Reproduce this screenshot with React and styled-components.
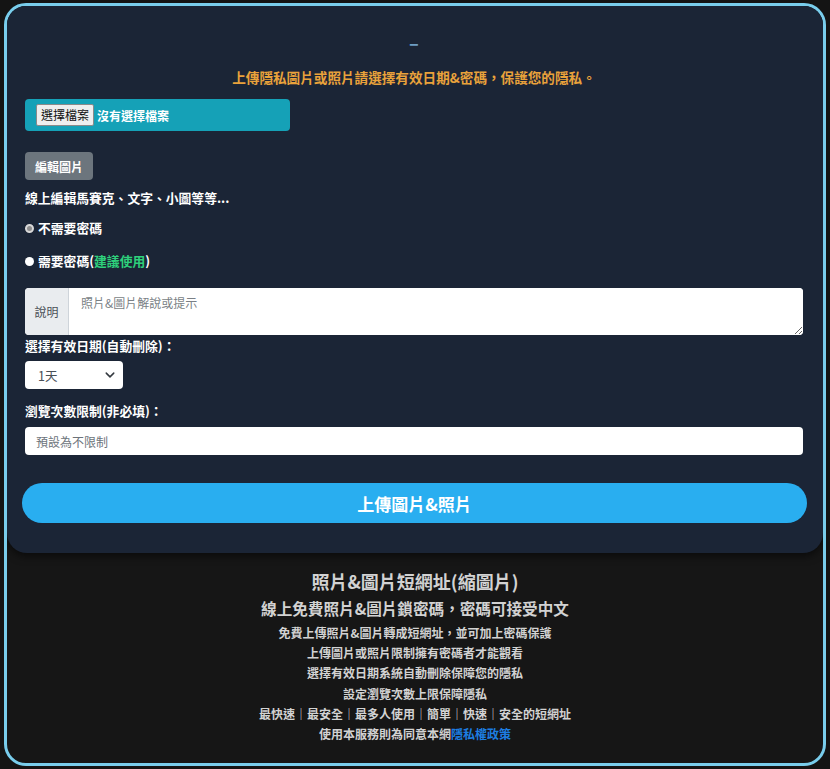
import React from 'react'
import styled, { createGlobalStyle } from 'styled-components'

const Global = createGlobalStyle`
  html, body { margin: 0; padding: 0; background: #141414; }
  body { font-family: "Noto Sans CJK TC", "Noto Sans", sans-serif; }
  * { box-sizing: border-box; }
`

const Frame = styled.div`
  margin: 3px 4px 0;
  height: 763px;
  border: 3px solid #79cdec;
  border-radius: 22px;
  background: #161616;
  overflow: hidden;
`

const Card = styled.div`
  background: #1b2536;
  border-radius: 0 0 20px 20px;
  padding: 24px 20px 30px 18px;
  box-shadow: 0 3px 8px rgba(0, 0, 0, 0.55);
`

const Dash = styled.div`
  text-align: center;
  color: #6f9fc4;
  font-size: 18px;
  font-weight: 700;
  line-height: 24px;
  height: 24px;
`

const Notice = styled.div`
  margin-top: 13px;
  text-align: center;
  color: #e9a23b;
  font-size: 13.6px;
  font-weight: 700;
  line-height: 20px;
`

const FileBox = styled.div`
  margin-top: 12px;
  width: 265px;
  height: 32px;
  background: #15a1b7;
  border-radius: 4px;
  display: flex;
  align-items: center;
  padding-left: 11px;
  gap: 3px;
`

const FileButton = styled.span`
  background: #efefef;
  border: 1px solid #8a8a8a;
  border-radius: 2px;
  color: #111;
  font-size: 12px;
  line-height: 18px;
  padding: 1px 4px;
`

const FileText = styled.span`
  color: #fff;
  font-size: 12px;
  font-weight: 700;
`

const GrayButton = styled.div`
  margin-top: 21px;
  display: inline-flex;
  align-items: center;
  justify-content: center;
  width: 68px;
  height: 28px;
  background: #6c757d;
  border-radius: 4px;
  color: #fff;
  font-size: 12px;
  font-weight: 700;
`

const Line = styled.div`
  margin-top: ${p => p.$mt || 0}px;
  color: #fff;
  font-size: 12.8px;
  font-weight: 700;
  line-height: 18px;
  display: flex;
  align-items: center;
`

const Radio = styled.span`
  width: 9px;
  height: 9px;
  border-radius: 50%;
  margin-right: 4px;
  background: ${p => (p.$checked ? '#8d8d8d' : '#fff')};
  border: ${p => (p.$checked ? '2px solid #d8d8d8' : 'none')};
`

const Green = styled.span`
  color: #2ed07b;
`

const InputGroup = styled.div`
  margin-top: 18px;
  display: flex;
  height: 47px;
  border-radius: 4px;
  overflow: hidden;
  background: #fff;
`

const Addon = styled.div`
  width: 44px;
  background: #e9ecef;
  border-right: 1px solid #ced4da;
  color: #495057;
  font-size: 12px;
  display: flex;
  align-items: center;
  justify-content: center;
`

const TextArea = styled.textarea`
  flex: 1;
  border: none;
  resize: vertical;
  padding: 6px 12px;
  font-family: inherit;
  font-size: 12px;
  line-height: 18px;
  outline: none;
  &::placeholder { color: #7a7f85; }
`

const Select = styled.div`
  margin-top: 6px;
  width: 98px;
  height: 28px;
  background: #fff;
  border-radius: 4px;
  display: flex;
  align-items: center;
  justify-content: space-between;
  padding: 0 8px 0 13px;
  color: #495057;
  font-size: 12.5px;
`

const Input = styled.input`
  display: block;
  margin-top: 7px;
  width: 100%;
  height: 28px;
  border: none;
  border-radius: 4px;
  padding: 0 11px;
  font-family: inherit;
  font-size: 12px;
  outline: none;
  &::placeholder { color: #6c737a; }
`

const BigButton = styled.div`
  margin: 28px -4px 0 -3px;
  height: 40px;
  border-radius: 20px;
  background: #29aef0;
  color: #fff;
  font-size: 17px;
  font-weight: 700;
  display: flex;
  align-items: center;
  justify-content: center;
`

const Footer = styled.div`
  padding-top: 16px;
  text-align: center;
  color: #d2d2d2;
  font-weight: 700;
`

const FooterTitle = styled.div`
  font-size: 18px;
  line-height: 24px;
`

const FooterSub = styled.div`
  margin-top: 4px;
  font-size: 15.6px;
  line-height: 22px;
`

const FooterLines = styled.div`
  margin-top: 4px;
  font-size: 12px;
  line-height: 20.2px;
`

const Link = styled.a`
  color: #1d7ee2;
  text-decoration: none;
`

const Chevron = () => (
  <svg width="10" height="10" viewBox="0 0 16 16">
    <path d="M2 5l6 6 6-6" fill="none" stroke="#343a40" strokeWidth="2.4" strokeLinecap="round" strokeLinejoin="round" />
  </svg>
)

const App = () => {
  return (
    <>
      <Global />
      <Frame>
        <Card>
          <Dash>–</Dash>
          <Notice>上傳隱私圖片或照片請選擇有效日期&密碼，保護您的隱私。</Notice>
          <FileBox>
            <FileButton>選擇檔案</FileButton>
            <FileText>沒有選擇檔案</FileText>
          </FileBox>
          <GrayButton>編輯圖片</GrayButton>
          <Line $mt={9}>線上編輯馬賽克、文字、小圖等等...</Line>
          <Line $mt={12}><Radio $checked />不需要密碼</Line>
          <Line $mt={15}><Radio />需要密碼(<Green>建議使用</Green>)</Line>
          <InputGroup>
            <Addon>說明</Addon>
            <TextArea placeholder="照片&圖片解說或提示" />
          </InputGroup>
          <Line $mt={2}>選擇有效日期(自動刪除)：</Line>
          <Select>
            <span>1天</span>
            <Chevron />
          </Select>
          <Line $mt={13}>瀏覽次數限制(非必填)：</Line>
          <Input placeholder="預設為不限制" />
          <BigButton>上傳圖片&照片</BigButton>
        </Card>
        <Footer>
          <FooterTitle>照片&圖片短網址(縮圖片)</FooterTitle>
          <FooterSub>線上免費照片&圖片鎖密碼，密碼可接受中文</FooterSub>
          <FooterLines>
            <div>免費上傳照片&圖片轉成短網址，並可加上密碼保護</div>
            <div>上傳圖片或照片限制擁有密碼者才能觀看</div>
            <div>選擇有效日期系統自動刪除保障您的隱私</div>
            <div>設定瀏覽次數上限保障隱私</div>
            <div>最快速｜最安全｜最多人使用｜簡單｜快速｜安全的短網址</div>
            <div>使用本服務則為同意本網<Link href="#">隱私權政策</Link></div>
          </FooterLines>
        </Footer>
      </Frame>
    </>
  )
}

export default App
